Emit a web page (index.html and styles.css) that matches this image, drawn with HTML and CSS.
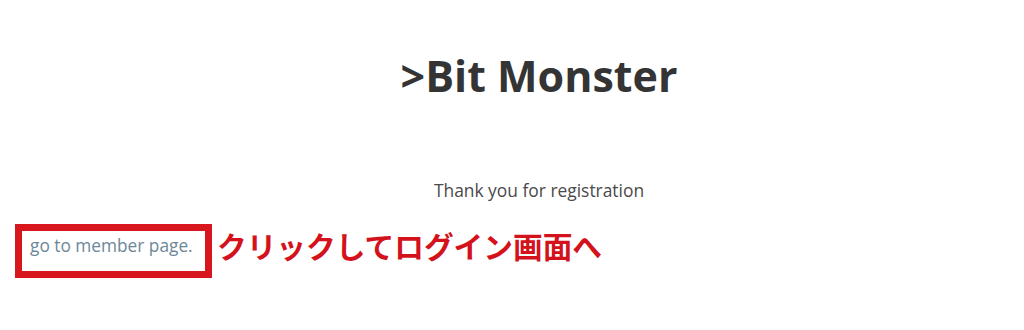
FILE: index.html
```html
<!DOCTYPE html>
<html lang="ja">
<head>
<meta charset="utf-8">
<title>Bit Monster</title>
<link rel="stylesheet" href="styles.css">
</head>
<body>
<div class="page">
  <header class="hero">
    <h1 class="title">&gt;Bit Monster</h1>
    <p class="thanks">Thank you for registration</p>
  </header>
  <div class="action-row">
    <div class="highlight-box"><a class="member-link" href="#">go to member page.</a></div>
    <span class="note">クリックしてログイン画面へ</span>
  </div>
</div>
</body>
</html>
```
FILE: styles.css
```css
html, body {
  margin: 0;
  padding: 0;
  background: #ffffff;
}
.page {
  width: 1024px;
  height: 330px;
  font-family: "Open Sans", "Noto Sans", sans-serif;
}
.hero {
  padding-left: 54px;
  text-align: center;
}
.title {
  margin: 0;
  padding-top: 48px;
  font-size: 43px;
  line-height: 56px;
  font-weight: 700;
  color: #343434;
}
.thanks {
  margin: 74px 0 0 0;
  font-size: 17.4px;
  line-height: 24px;
  color: #4a4a4a;
}
.action-row {
  display: flex;
  align-items: flex-start;
  margin-top: 22px;
  padding-left: 15px;
}
.highlight-box {
  box-sizing: border-box;
  width: 197px;
  height: 54px;
  border: 7px solid #d7161e;
  padding: 3px 0 0 8px;
}
.member-link {
  display: block;
  font-size: 17.3px;
  line-height: 24px;
  color: #6d8799;
  text-decoration: none;
  white-space: nowrap;
}
.note {
  margin: 2px 0 0 5px;
  font-family: "Noto Sans CJK JP", sans-serif;
  font-size: 29.7px;
  font-weight: 700;
  color: #d3121c;
  line-height: 40px;
  white-space: nowrap;
}
```
